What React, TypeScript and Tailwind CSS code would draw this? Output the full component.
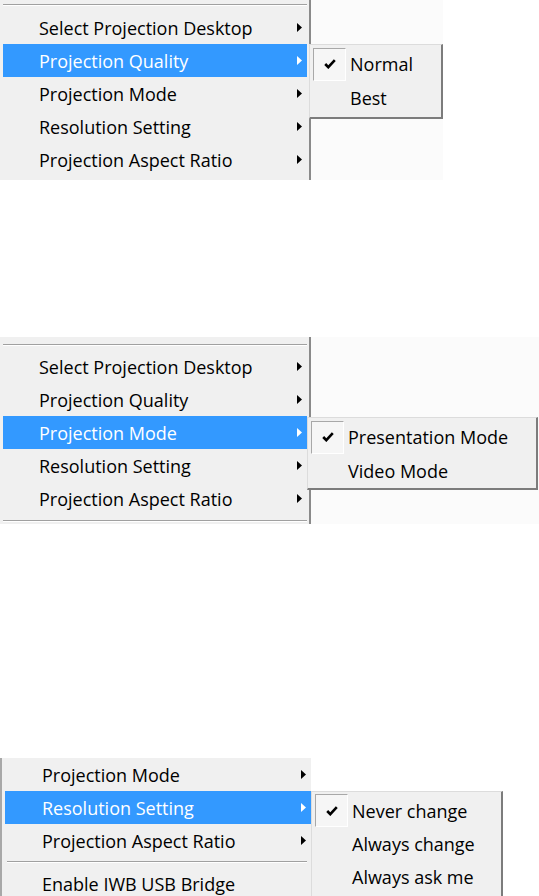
import React from 'react';

type Row = { label: string; active?: boolean };

const mainRows: Row[] = [
  { label: 'Select Projection Desktop' },
  { label: 'Projection Quality' },
  { label: 'Projection Mode' },
  { label: 'Resolution Setting' },
  { label: 'Projection Aspect Ratio' },
];

const Arrow = ({ light }: { light?: boolean }) => (
  <svg width="5" height="9" viewBox="0 0 5 9" className="shrink-0">
    <polygon points="0,0 5,4.5 0,9" fill={light ? '#ffffff' : '#000000'} />
  </svg>
);

const Separator = ({ className }: { className: string }) => (
  <div className={className}>
    <div className="border-t border-b border-t-[#a0a0a0] border-b-white" />
  </div>
);

const MenuRow = ({ row, textPad, arrowPad }: { row: Row; textPad: string; arrowPad: string }) => (
  <div
    className={`h-[33px] flex items-center justify-between ${textPad} ${arrowPad} ${
      row.active ? 'bg-[#3399ff] text-white' : 'text-black'
    }`}
  >
    <span className="whitespace-nowrap">{row.label}</span>
    <Arrow light={row.active} />
  </div>
);

const CheckBox = () => (
  <div className="w-[33px] h-[33px] shrink-0 flex items-center justify-center border-t border-l border-r border-b border-t-[#a8a8a8] border-l-[#a8a8a8] border-r-white border-b-white bg-[#f6f6f6]">
    <svg width="12" height="10" viewBox="0 0 12 10">
      <path d="M1.2 5 L4.3 8.2 L10.8 1.2" stroke="#000" strokeWidth="2.6" fill="none" />
    </svg>
  </div>
);

const SubMenu = ({
  items,
  rowH,
  className,
}: {
  items: string[];
  rowH: string;
  className: string;
}) => (
  <div
    className={`absolute bg-[#f0f0f0] border-t border-l border-r-2 border-b-2 border-t-[#dcdcdc] border-l-[#dcdcdc] border-r-[#7c7c7c] border-b-[#7c7c7c] pt-[2px] pl-[3px] ${className}`}
  >
    {items.map((label, i) => (
      <div key={label} className={`${rowH} flex items-center`}>
        {i === 0 ? <CheckBox /> : <div className="w-[33px] shrink-0" />}
        <span className="pl-[4px] whitespace-nowrap text-black">{label}</span>
      </div>
    ))}
  </div>
);

export default function App() {
  const withActive = (active: string) => mainRows.map(r => ({ ...r, active: r.label === active }));

  return (
    <div className="w-[539px] h-[896px] bg-white overflow-hidden font-['Open_Sans',sans-serif] text-[18px] leading-none">
      {/* first shot: quality */}
      <div className="relative flex h-[180px]">
        <div className="w-[311px] h-full bg-[#f0f0f0] border-r-2 border-[#8a8a8a] pl-[3px] pr-[2px]">
          <Separator className="h-[11px] pt-[4px]" />
          {withActive('Projection Quality').map(r => (
            <MenuRow key={r.label} row={r} textPad="pl-[36px]" arrowPad="pr-[5px]" />
          ))}
        </div>
        <div className="w-[132px] h-full bg-[#fbfbfb]" />
        <SubMenu items={['Normal', 'Best']} rowH="h-[34px]" className="left-[309px] top-[44px] w-[134px] h-[75px]" />
      </div>

      {/* second shot: mode */}
      <div className="relative flex mt-[157px] h-[187px]">
        <div className="w-[311px] h-full bg-[#f0f0f0] border-r-2 border-[#8a8a8a] pt-[3px] pl-[3px] pr-[2px]">
          <Separator className="h-[10px] pt-[4px]" />
          {withActive('Projection Mode').map(r => (
            <MenuRow key={r.label} row={r} textPad="pl-[36px]" arrowPad="pr-[5px]" />
          ))}
          <Separator className="h-[9px] pt-[5px]" />
        </div>
        <div className="flex-1 h-full bg-[#fbfbfb]" />
        <SubMenu
          items={['Presentation Mode', 'Video Mode']}
          rowH="h-[34px]"
          className="left-[307px] top-[80px] w-[231px] h-[73px]"
        />
      </div>

      {/* third shot: resolution */}
      <div className="relative flex mt-[234px] h-[138px]">
        <div className="w-[311px] h-[142px] bg-[#f0f0f0] border-l-2 border-[#a8a8a8] pl-[3px]">
          <MenuRow row={{ label: 'Projection Mode' }} textPad="pl-[37px]" arrowPad="pr-[5px]" />
          <MenuRow row={{ label: 'Resolution Setting', active: true }} textPad="pl-[37px]" arrowPad="pr-[5px]" />
          <MenuRow row={{ label: 'Projection Aspect Ratio' }} textPad="pl-[37px]" arrowPad="pr-[5px]" />
          <Separator className="h-[10px] pt-[4px] pl-[2px] pr-[4px]" />
          <div className="h-[33px] flex items-center pl-[37px] text-black whitespace-nowrap">Enable IWB USB Bridge</div>
        </div>
        <SubMenu
          items={['Never change', 'Always change', 'Always ask me']}
          rowH="h-[33px]"
          className="left-[311px] top-[33px] w-[192px] h-[110px]"
        />
      </div>
    </div>
  );
}
